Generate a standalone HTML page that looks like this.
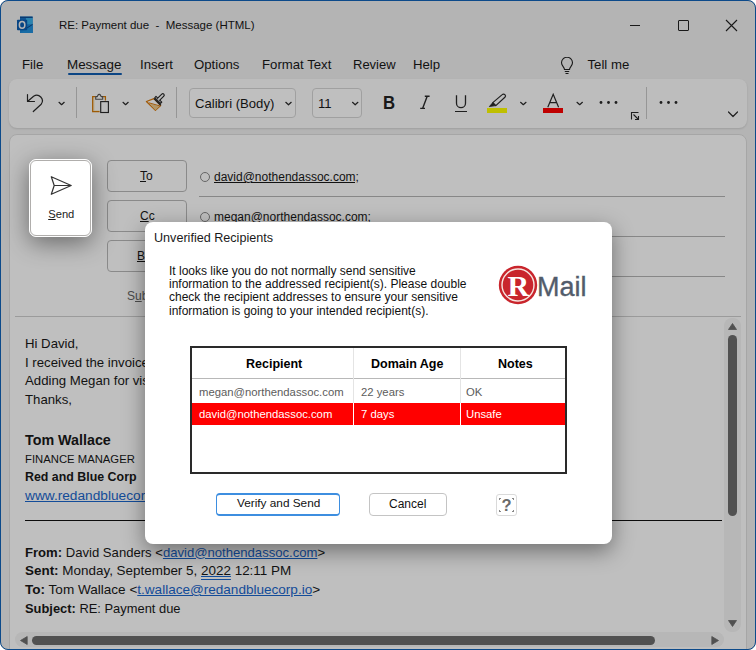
<!DOCTYPE html>
<html><head><meta charset="utf-8">
<style>
*{box-sizing:border-box}
html,body{margin:0;padding:0;width:756px;height:650px;overflow:hidden;background:#fff;font-family:"Liberation Sans",sans-serif}
.a{position:absolute;white-space:nowrap;line-height:1}
#win{position:absolute;left:0;top:0;width:756px;height:650px;border-radius:8px;background:#f0f0f0;overflow:hidden}
#wb{position:absolute;left:0;top:0;width:756px;height:650px;border:1px solid #0c4a8a;border-radius:8px}
.t{color:#181818}
#ribbon{position:absolute;left:9px;top:79px;width:738px;height:49px;background:#fcfcfc;border-radius:8px;box-shadow:0 1px 2px rgba(0,0,0,.12)}
#panel{position:absolute;left:9px;top:134px;width:738px;height:531px;background:#fff;border:1px solid #dedede;border-radius:8px}
.fbtn{position:absolute;left:107px;width:80px;height:32px;border:1px solid #b9b9b9;border-radius:4px;background:#fff}
.hl{position:absolute;left:199px;width:526px;height:1px;background:#b5b5b5}
.cb{position:absolute;border:1px solid #d6d6d6;border-radius:4px;background:#fff}
#overlay{position:absolute;left:0;top:0;width:756px;height:650px;background:rgba(0,0,0,.25)}
#send{position:absolute;left:29px;top:159px;width:63px;height:78px;border-radius:7px;background:#fff;border:1px solid #fff;box-shadow:0 6px 24px rgba(0,0,0,.45)}
#send .in{position:absolute;left:0;top:0;right:0;bottom:0;border:1px solid #b0aeac;border-radius:6px}
#dlg{position:absolute;left:145px;top:222px;width:467px;height:322px;background:#fff;border-radius:8px;box-shadow:0 7px 22px rgba(0,0,0,.42)}
.d{font-family:"Liberation Sans",sans-serif;color:#111}
.sb{background:#6c6c6c;border-radius:5px;position:absolute}
</style></head><body>
<div id="win">
  <!-- title bar -->
  <svg class="a" style="left:0;top:0" width="40" height="40" viewBox="0 0 40 40">
    <rect x="20" y="16.6" width="12.6" height="16.4" fill="#1d7fd0"/>
    <rect x="20" y="16.6" width="12.6" height="1.4" fill="#0c4f98"/>
    <rect x="25.8" y="18" width="6.8" height="6.6" fill="#3ab0ea"/>
    <rect x="20" y="18" width="5.8" height="6.6" fill="#1670c4"/>
    <path d="M20 24.6H32.6V33H20Z" fill="#1a86d6"/>
    <path d="M25 29.5L32.6 24.6V33H20Z" fill="#2090dc"/>
    <path d="M26.5 28.3L32.6 24.4" stroke="#0d3f80" stroke-width="0.9"/>
    <rect x="17" y="19.7" width="10.2" height="10.5" rx="0.8" fill="#0a5cb0"/>
    <ellipse cx="22.1" cy="24.9" rx="2.75" ry="3.3" fill="none" stroke="#f0f0f0" stroke-width="1.5"/>
  </svg>
  <div class="a t" style="left:59px;top:20px;font-size:11.5px">RE: Payment due&nbsp; -&nbsp; Message (HTML)</div>
  <!-- window controls -->
  <div class="a" style="left:630px;top:25px;width:10px;height:1px;background:#222"></div>
  <div class="a" style="left:678px;top:20px;width:11px;height:11px;border:1px solid #222;border-radius:1px"></div>
  <svg class="a" style="left:725px;top:19px" width="13" height="13" viewBox="0 0 13 13"><path d="M1 1L12 12M12 1L1 12" stroke="#222" stroke-width="1.1"/></svg>

  <!-- menu -->
  <div class="a t" style="left:22px;top:57.5px;font-size:13.2px">File</div>
  <div class="a t" style="left:67px;top:57.5px;font-size:13.4px">Message</div>
  <div class="a" style="left:68px;top:73px;width:54px;height:2px;background:#0f5cb0;border-radius:1px"></div>
  <div class="a t" style="left:140px;top:57.5px;font-size:13.2px">Insert</div>
  <div class="a t" style="left:194px;top:57.5px;font-size:13.2px">Options</div>
  <div class="a t" style="left:262px;top:57.5px;font-size:13.2px">Format Text</div>
  <div class="a t" style="left:353px;top:57.5px;font-size:13px">Review</div>
  <div class="a t" style="left:413px;top:57.5px;font-size:13.2px">Help</div>
  <svg class="a" style="left:559px;top:57px" width="16" height="18" viewBox="0 0 16 18"><path d="M5.5 12.5 C5.5 10 2.5 9 2.5 5.8 A5.5 5.5 0 0 1 13.5 5.8 C13.5 9 10.5 10 10.5 12.5 Z" fill="none" stroke="#222" stroke-width="1.1"/><path d="M5.8 14.5H10.2M6.5 16.5H9.5" stroke="#222" stroke-width="1.1"/></svg>
  <div class="a t" style="left:587.5px;top:57.5px;font-size:13.2px">Tell me</div>

  <!-- ribbon -->
  <div id="ribbon"></div>
  <!-- ribbon icons -->
  <div class="cb" style="left:189px;top:88px;width:107px;height:30px"></div>
  <div class="cb" style="left:312px;top:88px;width:50px;height:30px"></div>
  <svg class="a" style="left:0;top:0" width="756" height="135" viewBox="0 0 756 135">
    <g fill="none" stroke="#2a2a2a" stroke-width="1.2" stroke-linecap="round" stroke-linejoin="round">
      <path d="M27.5 94.5V101.5H34.5"/>
      <path d="M27.8 101.2L33.6 96.2A5.6 5.6 0 0 1 41.2 104.2L33.3 111.5"/>
      <path d="M59 102.3L61.6 104.7L64.2 102.3"/>
      <path d="M123 102.3L125.6 104.7L128.2 102.3"/>
      <path d="M520.6 102.3L523.3 104.7L526 102.3"/>
      <path d="M577 102.3L579.7 104.7L582.4 102.3"/>
      <path d="M352.5 102.3L355.2 104.8L357.9 102.3"/>
      <path d="M285.8 102.3L288.5 104.8L291.2 102.3"/>
      <path d="M728.5 112L733 116.5L737.5 112"/>
    </g>
    <line x1="76.5" y1="87" x2="76.5" y2="118" stroke="#c9c9c9" stroke-width="1"/>
    <line x1="176.5" y1="87" x2="176.5" y2="118" stroke="#c9c9c9" stroke-width="1"/>
    <line x1="646.5" y1="87" x2="646.5" y2="119" stroke="#c9c9c9" stroke-width="1"/>
    <!-- clipboard -->
    <path d="M94 97.6V110.9H99.6" fill="none" stroke="#f7e3b0" stroke-width="0.8"/><path d="M95.7 96.6H92.7V111.6H99.6M102.7 96.6H105.4V100.4" fill="none" stroke="#d27806" stroke-width="1.3"/>
    <path d="M95.7 99.2V96.6H97.3L97.9 95.2A1.4 1.4 0 0 1 99.1 94.4H99.3A1.4 1.4 0 0 1 100.5 95.2L101.1 96.6H102.7V99.2Z" fill="#fcfcfc" stroke="#555" stroke-width="1.1" stroke-linejoin="round"/>
    <rect x="100.7" y="101.6" width="7.7" height="10.9" fill="none" stroke="#2a2a2a" stroke-width="1.15"/>
    <!-- format painter -->
    <path d="M146.4 101.5L153.9 98.6L160.7 105.6L155.4 110.3Z" fill="#fff" stroke="#d97b0f" stroke-width="1.2" stroke-linejoin="round"/>
    <path d="M149.5 103.5L159.5 106.2L155.4 110.3Z" fill="#ecc98a"/>
    <path d="M148.8 102.8L159.8 105.9" stroke="#d97b0f" stroke-width="1"/>
    <path d="M154 98.5L160.8 105.3" stroke="#2a2a2a" stroke-width="1.5"/>
    <path d="M154.8 97.6L156 96.4L161.8 102.2L160.6 103.4Z" fill="none" stroke="#2a2a2a" stroke-width="1.1" stroke-linejoin="round"/>
    <path d="M157.2 98.6L161.8 94.1A1.35 1.35 0 0 1 163.8 96.1L159.3 100.7" fill="#fff" stroke="#2a2a2a" stroke-width="1.2" stroke-linejoin="round"/>
    <!-- italic -->
    <path d="M424.8 96.2H429.6M420.2 108.4H425M427.2 96.2L422.6 108.4" fill="none" stroke="#2a2a2a" stroke-width="1.4"/>
    <!-- underline U -->
    <path d="M456.5 95.3V103.2A4.5 4.5 0 0 0 465.5 103.2V95.3" fill="none" stroke="#2a2a2a" stroke-width="1.3"/>
    <line x1="455" y1="111.5" x2="467" y2="111.5" stroke="#2a2a2a" stroke-width="1"/>
    <!-- highlighter -->
    <path d="M492.8 102.6L502.2 94.6A1.8 1.8 0 0 1 504.9 97.3L495.8 105.6Z" fill="none" stroke="#2a2a2a" stroke-width="1.2" stroke-linejoin="round"/><path d="M492.8 102.6L489.3 106.6L495.8 105.6Z" fill="#2a2a2a" stroke="#2a2a2a" stroke-width="0.8" stroke-linejoin="round"/>
    <rect x="487" y="108" width="20" height="5" fill="#ffff00"/>
    <!-- font color -->
    <path d="M547.8 107.2L553.2 94.2L558.6 107.2M549.7 102.6H556.7" fill="none" stroke="#2a2a2a" stroke-width="1.2"/>
    <rect x="543" y="108" width="20" height="5" fill="#ff0000"/>
    <!-- dots -->
    <g fill="#2a2a2a"><circle cx="601" cy="102.5" r="1.4"/><circle cx="608.5" cy="102.5" r="1.4"/><circle cx="616" cy="102.5" r="1.4"/>
    <circle cx="661" cy="102.5" r="1.4"/><circle cx="668.5" cy="102.5" r="1.4"/><circle cx="676" cy="102.5" r="1.4"/></g>
    <!-- dialog launcher -->
    <path d="M631.5 119.5V112.5H638.5M633.5 114.5L638.5 119.5M635 119.5H638.5V116" fill="none" stroke="#2a2a2a" stroke-width="1.1"/>
  </svg>
  <div class="a" style="left:382.5px;top:93px;font-size:19px;font-weight:bold;color:#222;transform:scaleX(0.88);transform-origin:0 0">B</div>
  <div class="a t" style="left:195px;top:96.5px;font-size:13.1px">Calibri (Body)</div>
  <div class="a t" style="left:318px;top:96.5px;font-size:13.1px">11</div>

  <!-- compose panel -->
  <div id="panel"></div>
  <div class="fbtn" style="top:160px"></div>
  <div class="fbtn" style="top:200px"></div>
  <div class="fbtn" style="top:240px"></div>
  <div class="a t" style="left:140px;top:170.4px;font-size:12px"><u>T</u>o</div>
  <div class="a t" style="left:140px;top:210.4px;font-size:12px"><u>C</u>c</div>
  <div class="a t" style="left:137px;top:250.4px;font-size:12px"><u>B</u>cc</div>
  <div class="a" style="left:200px;top:171.5px;width:10px;height:10px;border:1px solid #888;border-radius:50%"></div>
  <div class="a t" style="left:214px;top:171px;font-size:12px;text-decoration:underline">david@nothendassoc.com;</div>
  <div class="hl" style="top:196px"></div>
  <div class="a" style="left:200px;top:211.5px;width:10px;height:10px;border:1px solid #888;border-radius:50%"></div>
  <div class="a t" style="left:214px;top:211px;font-size:12px">megan@northendassoc.com;</div>
  <div class="hl" style="top:236px"></div>
  <div class="hl" style="top:276px"></div>
  <div class="a" style="left:127px;top:290px;font-size:12px;color:#666">S<u>u</u>bject</div>
  <div class="a" style="left:15px;top:316px;width:726px;height:1px;background:#cfcfcf"></div>

  <!-- body -->
  <div class="a t" style="left:25px;top:335px;font-size:13.2px;line-height:18.67px;white-space:pre">Hi David,
I received the invoice and will process it today.
Adding Megan for visibility.
Thanks,</div>
  <div class="a t" style="left:25px;top:432.5px;font-size:14.3px;font-weight:bold">Tom Wallace</div>
  <div class="a t" style="left:25px;top:453.5px;font-size:11.3px">FINANCE MANAGER</div>
  <div class="a t" style="left:25px;top:470.5px;font-size:12.4px;font-weight:bold">Red and Blue Corp</div>
  <div class="a" style="left:25px;top:488.6px;font-size:13.7px;color:#1a66cc;text-decoration:underline">www.redandbluecorp.io</div>
  <div class="a" style="left:25px;top:520px;width:697px;height:1px;background:#111"></div>
  <div class="a t" style="left:25px;top:543.5px;font-size:13.1px;line-height:18.8px"><b>From:</b> David Sanders &lt;<span style="color:#1a66cc;text-decoration:underline">david@nothendassoc.com</span>&gt;</div>
  <div class="a t" style="left:25px;top:562.3px;font-size:13.45px;line-height:18.8px"><b>Sent:</b> Monday, September 5, <span style="text-decoration:underline double #1a66cc">2022</span> 12:11 PM</div>
  <div class="a t" style="left:25px;top:581.1px;font-size:13.55px;line-height:18.8px"><b>To:</b> Tom Wallace &lt;<span style="color:#1a66cc;text-decoration:underline">t.wallace@redandbluecorp.io</span>&gt;</div>
  <div class="a t" style="left:25px;top:599.9px;font-size:12.9px;line-height:18.8px"><b>Subject:</b> RE: Payment due</div>

  <!-- scrollbars -->
  <div class="a" style="left:724px;top:318px;width:17px;height:314px;background:#f4f4f4;border-radius:8px"></div>
  <div class="sb" style="left:728px;top:335px;width:9px;height:181px"></div>
  <svg class="a" style="left:724px;top:318px" width="17" height="314"><path d="M4.5 11.5L8.5 5.5L12.5 11.5Z M4.5 302.5L8.5 308.5L12.5 302.5Z" fill="#6c6c6c" stroke="#6c6c6c" stroke-width="0.8" stroke-linejoin="round"/></svg>
  <div class="a" style="left:15px;top:632px;width:709px;height:15px;background:#f4f4f4;border-radius:8px"></div>
  <div class="sb" style="left:32px;top:636px;width:623px;height:9px"></div>
  <svg class="a" style="left:15px;top:632px" width="709" height="15"><path d="M12.2 4.5L5.5 8.5L12.2 12.5Z M696.8 4.5L703.5 8.5L696.8 12.5Z" fill="#6c6c6c" stroke="#6c6c6c" stroke-width="0.8" stroke-linejoin="round"/></svg>
</div>
<div id="overlay" style="border-radius:8px"></div>
<div id="wb"></div>
<div id="send"><div class="in"></div>
  <svg class="a" style="left:19px;top:15px" width="24" height="22" viewBox="0 0 24 22"><path d="M2.3 1.7L22.2 10.5L2.3 19.3L5.2 10.5Z M5.2 10.5H22.2" fill="none" stroke="#333" stroke-width="1.2" stroke-linejoin="round"/></svg>
  <div class="a" style="left:18.2px;top:48.8px;font-size:11.2px;color:#1c1c1c"><u>S</u>end</div>
</div>
<div id="dlg"></div>
<div class="a d" style="left:154px;top:231.5px;font-size:12.6px;color:#1a1a1a">Unverified Recipients</div>
<div class="a d" style="left:169px;top:264.6px;font-size:12px;line-height:13.33px;white-space:pre;color:#111">It looks like you do not normally send sensitive
information to the addressed recipient(s). Please double
check the recipient addresses to ensure your sensitive
information is going to your intended recipient(s).</div>
<!-- RMail logo -->
<svg class="a" style="left:497px;top:264px" width="42" height="42" viewBox="0 0 42 42">
  <circle cx="21" cy="21" r="19.2" fill="#c9252c"/>
  <circle cx="21" cy="21" r="16" fill="none" stroke="#f6e6e0" stroke-width="1.4"/>
  <text x="21.3" y="32" text-anchor="middle" font-family="Liberation Serif" font-weight="bold" font-size="30" fill="#fff">R</text>
</svg>
<div class="a" style="left:537px;top:274px;font-size:27px;color:#525c6b;-webkit-text-stroke:0.35px #525c6b">Mail</div>
<!-- table -->
<div class="a" style="left:190px;top:346px;width:377px;height:128px;border:2px solid #2a2a2a;background:#fff"></div>
<div class="a" style="left:192px;top:378px;width:373px;height:1px;background:#b8b8b8"></div>
<div class="a" style="left:352.5px;top:348px;width:1px;height:77px;background:#e4e4e4"></div>
<div class="a" style="left:460px;top:348px;width:1px;height:77px;background:#e4e4e4"></div>
<div class="a" style="left:192px;top:403px;width:373px;height:22px;background:#ff0000"></div>
<div class="a" style="left:352.5px;top:403px;width:1px;height:22px;background:#ffffff"></div>
<div class="a" style="left:460px;top:403px;width:1px;height:22px;background:#ffffff"></div>
<div class="a d" style="left:246px;top:358px;font-size:12.5px;font-weight:bold;color:#000">Recipient</div>
<div class="a d" style="left:371px;top:358px;font-size:12.5px;font-weight:bold;color:#000">Domain Age</div>
<div class="a d" style="left:498px;top:358px;font-size:12.5px;font-weight:bold;color:#000">Notes</div>
<div class="a d" style="left:199px;top:386.7px;font-size:11.3px;color:#5c5c5c">megan@northendassoc.com</div>
<div class="a d" style="left:361px;top:386.7px;font-size:11.3px;color:#5c5c5c">22 years</div>
<div class="a d" style="left:466px;top:386.7px;font-size:11.3px;color:#5c5c5c">OK</div>
<div class="a d" style="left:199px;top:408.6px;font-size:11.3px;color:#fff">david@nothendassoc.com</div>
<div class="a d" style="left:361px;top:408.6px;font-size:11.3px;color:#fff">7 days</div>
<div class="a d" style="left:466px;top:408.6px;font-size:11.3px;color:#fff">Unsafe</div>
<!-- buttons -->
<div class="a" style="left:216px;top:493px;width:124px;height:23px;border:2px solid #3d8ee0;border-left-width:1px;border-right-width:1px;border-radius:4px;background:#fff"></div>
<div class="a d" style="left:237px;top:498px;font-size:11.8px;color:#111">Verify and Send</div>
<div class="a" style="left:369px;top:493px;width:78px;height:23px;border:1px solid #c4c4c4;border-radius:4px;background:#fff"></div>
<div class="a d" style="left:389px;top:498px;font-size:12px;color:#111">Cancel</div>
<div class="a" style="left:496px;top:494px;width:21px;height:22px;border:1px solid #dadada;border-radius:3px;background:#fff"></div>
<div class="a d" style="left:501.5px;top:497px;font-size:16.5px;font-weight:bold;color:#6a6a6a">?</div>
<svg class="a" style="left:496px;top:494px" width="21" height="22"><g fill="#888"><rect x="3" y="4" width="2" height="1"/><rect x="3" y="4" width="1" height="2"/><rect x="16" y="4" width="2" height="1"/><rect x="17" y="4" width="1" height="2"/><rect x="3" y="17" width="2" height="1"/><rect x="3" y="16" width="1" height="2"/><rect x="16" y="17" width="2" height="1"/><rect x="17" y="16" width="1" height="2"/></g></svg>
</body></html>
